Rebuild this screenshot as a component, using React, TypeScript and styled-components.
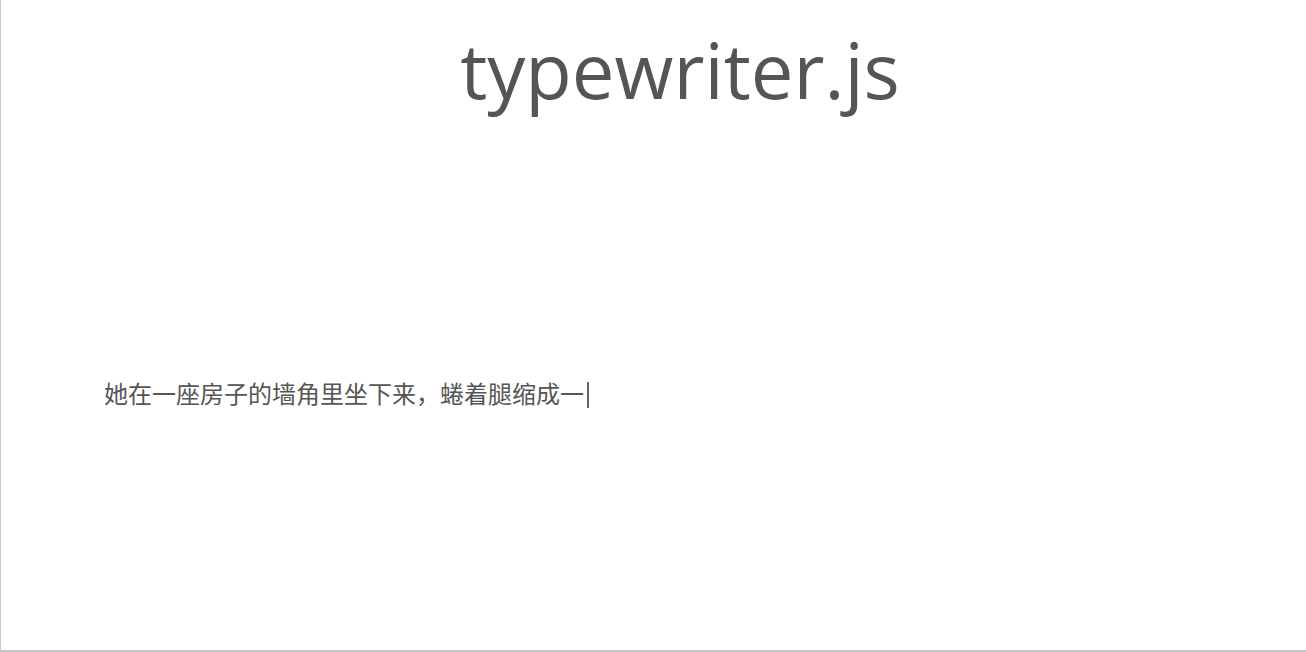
import styled, { createGlobalStyle } from "styled-components";

const GlobalStyle = createGlobalStyle`
  html, body {
    margin: 0;
    padding: 0;
    background: #fff;
  }
  body {
    font-family: "Open Sans", "Noto Sans CJK SC", sans-serif;
    color: #555;
  }
`;

const Page = styled.div`
  box-sizing: border-box;
  width: 1306px;
  height: 652px;
  border-left: 1px solid #c8c8c8;
  border-bottom: 2px solid #c8c8c8;
  display: flex;
  flex-direction: column;
  padding: 0 50px 0 103px;
`;

const Title = styled.h1`
  margin: 20px 0 0;
  text-align: center;
  font-family: "Open Sans", sans-serif;
  font-weight: 400;
  font-size: 76px;
  line-height: 100px;
  color: #555;
`;

const Typed = styled.p`
  margin: 257px 0 0;
  font-family: "Noto Sans CJK SC", sans-serif;
  font-size: 24px;
  line-height: 32px;
  color: #555;
`;

const Cursor = styled.span`
  display: inline-block;
  width: 2px;
  height: 26px;
  margin-left: 3px;
  vertical-align: -5px;
  background: #666;
`;

const App = () => {
  return (
    <>
      <GlobalStyle />
      <Page>
        <Title>typewriter.js</Title>
        <Typed>
          她在一座房子的墙角里坐下来，蜷着腿缩成一
          <Cursor />
        </Typed>
      </Page>
    </>
  );
};

export default App;
